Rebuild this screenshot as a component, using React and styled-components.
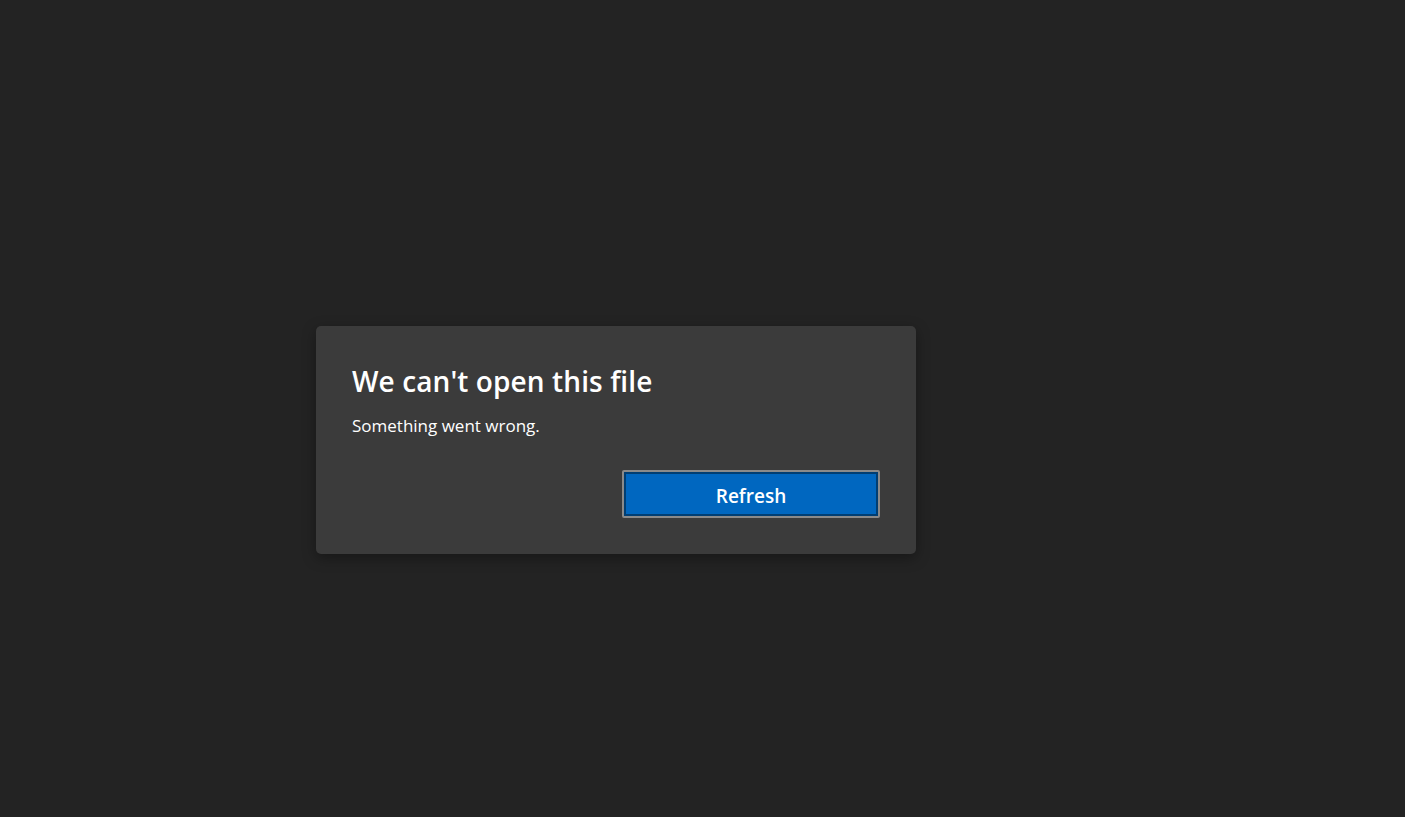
import styled, { createGlobalStyle } from "styled-components";

const GlobalStyle = createGlobalStyle`
    html, body {
        margin: 0;
        padding: 0;
        background: #232323;
    }
    body {
        font-family: "Open Sans", "Noto Sans", "Liberation Sans", sans-serif;
    }
`

const Page = styled.div`
    width: 100%;
    height: 100vh;
    box-sizing: border-box;
    background: #232323;
    padding: 326px 0 0 316px;
`

const Dialog = styled.div`
    width: 600px;
    box-sizing: border-box;
    padding: 36px;
    background: #3b3b3b;
    border-radius: 5px;
    box-shadow: 0 4px 14px rgba(0, 0, 0, 0.35);
    display: flex;
    flex-direction: column;
`

const Title = styled.h1`
    margin: 0;
    font-size: 28px;
    line-height: 38px;
    font-weight: 600;
    letter-spacing: 0.1px;
    color: #ffffff;
`

const Message = styled.p`
    margin: 14px 0 0 0;
    font-size: 17px;
    line-height: 24px;
    color: #ffffff;
`

const Actions = styled.div`
    display: flex;
    justify-content: flex-end;
    margin-top: 32px;
`

const Button = styled.button`
    width: 258px;
    height: 48px;
    box-sizing: border-box;
    border: 2px solid #8a8a8a;
    border-radius: 2px;
    padding: 3px 0 0 0;
    background: #0067c0;
    box-shadow: inset 0 0 0 2px #003e73;
    color: #ffffff;
    font-family: inherit;
    font-size: 19px;
    font-weight: 600;
    cursor: pointer;
`

export default function App() {
    return (
        <>
            <GlobalStyle />
            <Page>
                <Dialog>
                    <Title>We can't open this file</Title>
                    <Message>Something went wrong.</Message>
                    <Actions>
                        <Button>Refresh</Button>
                    </Actions>
                </Dialog>
            </Page>
        </>
    );
}
